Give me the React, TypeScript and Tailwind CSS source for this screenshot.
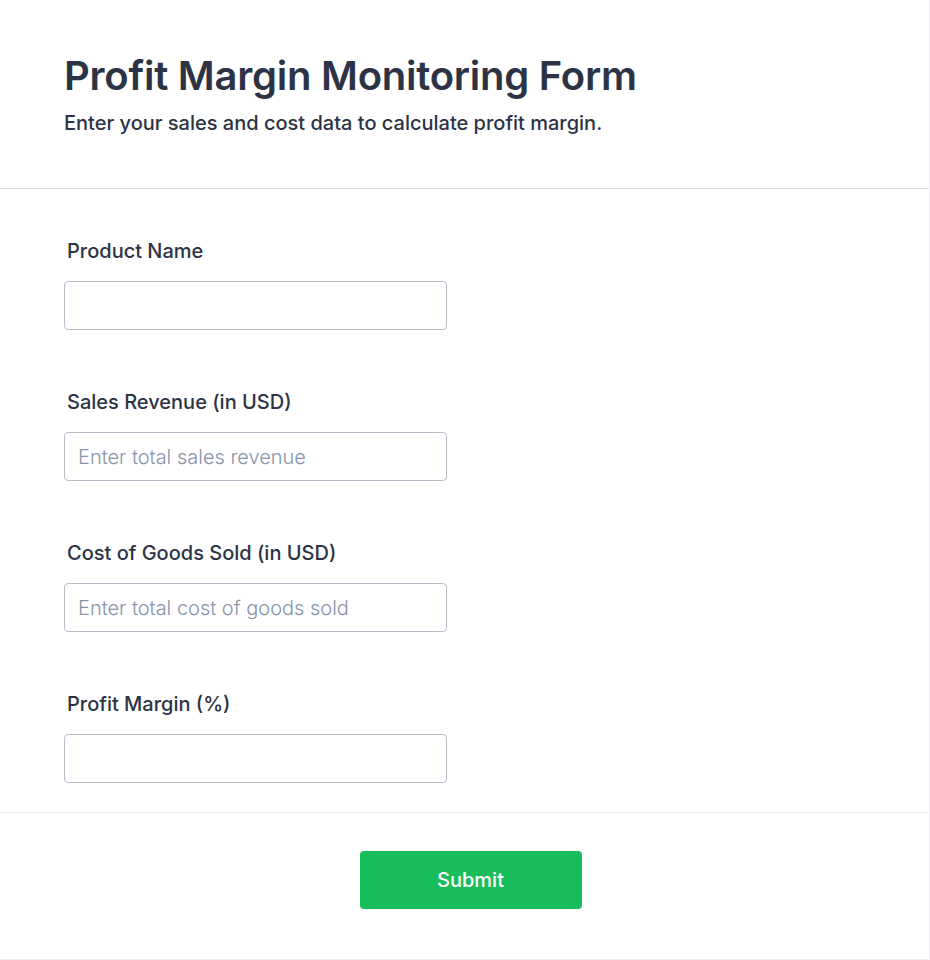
const fields = [
  { label: 'Product Name', placeholder: '' },
  { label: 'Sales Revenue (in USD)', placeholder: 'Enter total sales revenue' },
  { label: 'Cost of Goods Sold (in USD)', placeholder: 'Enter total cost of goods sold' },
  { label: 'Profit Margin (%)', placeholder: '' },
];

export default function App() {
  return (
    <div className="min-h-[960px] w-[930px] bg-white font-['Inter',sans-serif] text-[#2c3345]">
      <div className="w-[930px] h-[960px] border-r border-b border-[#ededf3] flex flex-col">
        <header className="px-[64px] pt-[52px] h-[189px] border-b border-[#d8d8ea]">
          <h1 className="text-[40px] leading-[48px] font-semibold tracking-[-0.25px]">
            Profit Margin Monitoring Form
          </h1>
          <p className="mt-[9px] text-[20px] leading-[28px] font-medium">
            Enter your sales and cost data to calculate profit margin.
          </p>
        </header>

        <form className="px-[64px] pt-[48px] flex flex-col gap-[58px] h-[624px] border-b border-[#eaeaf0]">
          {fields.map((f) => (
            <div key={f.label} className="flex flex-col">
              <label className="pl-[3px] text-[20px] leading-[28px] font-medium">{f.label}</label>
              <input
                type="text"
                placeholder={f.placeholder}
                className="mt-[16px] w-[383px] h-[49px] rounded-[4px] border border-[#b8bdc9] bg-white px-[13px] text-[20px] font-light text-[#2c3345] placeholder:text-[#8894ab] outline-none"
              />
            </div>
          ))}
        </form>

        <div className="flex justify-center pl-[12px] pt-[38px]">
          <button
            type="button"
            className="w-[222px] h-[58px] rounded-[4px] bg-[#18bd5b] text-white text-[20px] font-medium"
          >
            Submit
          </button>
        </div>
      </div>
    </div>
  );
}
